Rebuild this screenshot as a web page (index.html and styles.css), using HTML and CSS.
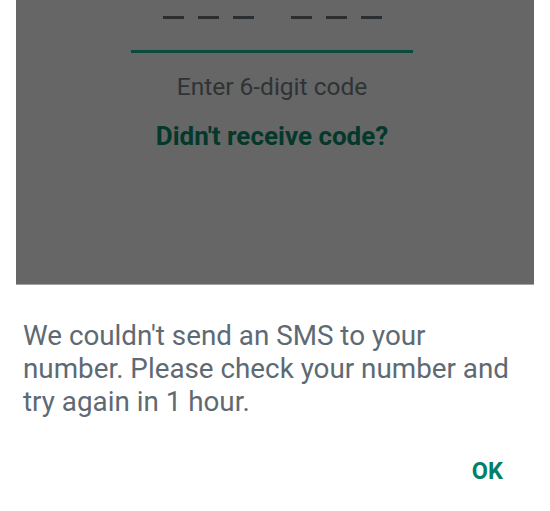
FILE: index.html
```html
<!DOCTYPE html>
<html lang="en">
<head>
<meta charset="utf-8">
<title>Verify</title>
<link rel="stylesheet" href="styles.css">
</head>
<body>
  <div class="screen">
    <div class="verify">
      <div class="code">
        <div class="group"><span class="dash"></span><span class="dash"></span><span class="dash"></span></div>
        <div class="group"><span class="dash"></span><span class="dash"></span><span class="dash"></span></div>
      </div>
      <div class="underline"></div>
      <p class="hint">Enter 6-digit code</p>
      <p class="resend">Didn't receive code?</p>
    </div>
  </div>
  <div class="dialog">
    <p class="message">We couldn't send an SMS to your<br>number. Please check your number and<br>try again in 1 hour.</p>
    <div class="actions"><button class="ok">OK</button></div>
  </div>
</body>
</html>
```
FILE: styles.css
```css
html, body {
  margin: 0;
  padding: 0;
  background: #ffffff;
  font-family: Roboto, "Noto Sans", "Liberation Sans", sans-serif;
}
.screen {
  margin: 0 16px;
  height: 285px;
  background: #666666;
  border-bottom: 1px solid #a3a3a3;
  padding-right: 6px;
  box-sizing: border-box;
  overflow: hidden;
}
.verify {
  display: flex;
  flex-direction: column;
  align-items: center;
  padding-top: 16px;
}
.code {
  display: flex;
  gap: 37px;
}
.group {
  display: flex;
  gap: 14px;
}
.dash {
  display: block;
  width: 21px;
  height: 3px;
  background: #2a2e30;
}
.underline {
  width: 282px;
  height: 3px;
  background: #0b4b3d;
  margin-top: 31px;
}
.hint {
  margin: 20px 0 0;
  font-size: 24.5px;
  line-height: 28px;
  color: #2e3336;
}
.resend {
  margin: 20px 0 0;
  font-size: 26px;
  line-height: 30px;
  font-weight: 700;
  color: #03382b;
}
.dialog {
  padding: 0 16px 0 23px;
}
.message {
  margin: 34px 0 0;
  font-size: 27.8px;
  line-height: 33px;
  color: #5e6a73;
}
.actions {
  display: flex;
  justify-content: flex-end;
  margin-top: 40px;
}
.ok {
  border: 0;
  background: none;
  padding: 0;
  margin-right: 31px;
  font-family: inherit;
  font-size: 23.5px;
  font-weight: 700;
  line-height: 26px;
  color: #00806b;
}
```
